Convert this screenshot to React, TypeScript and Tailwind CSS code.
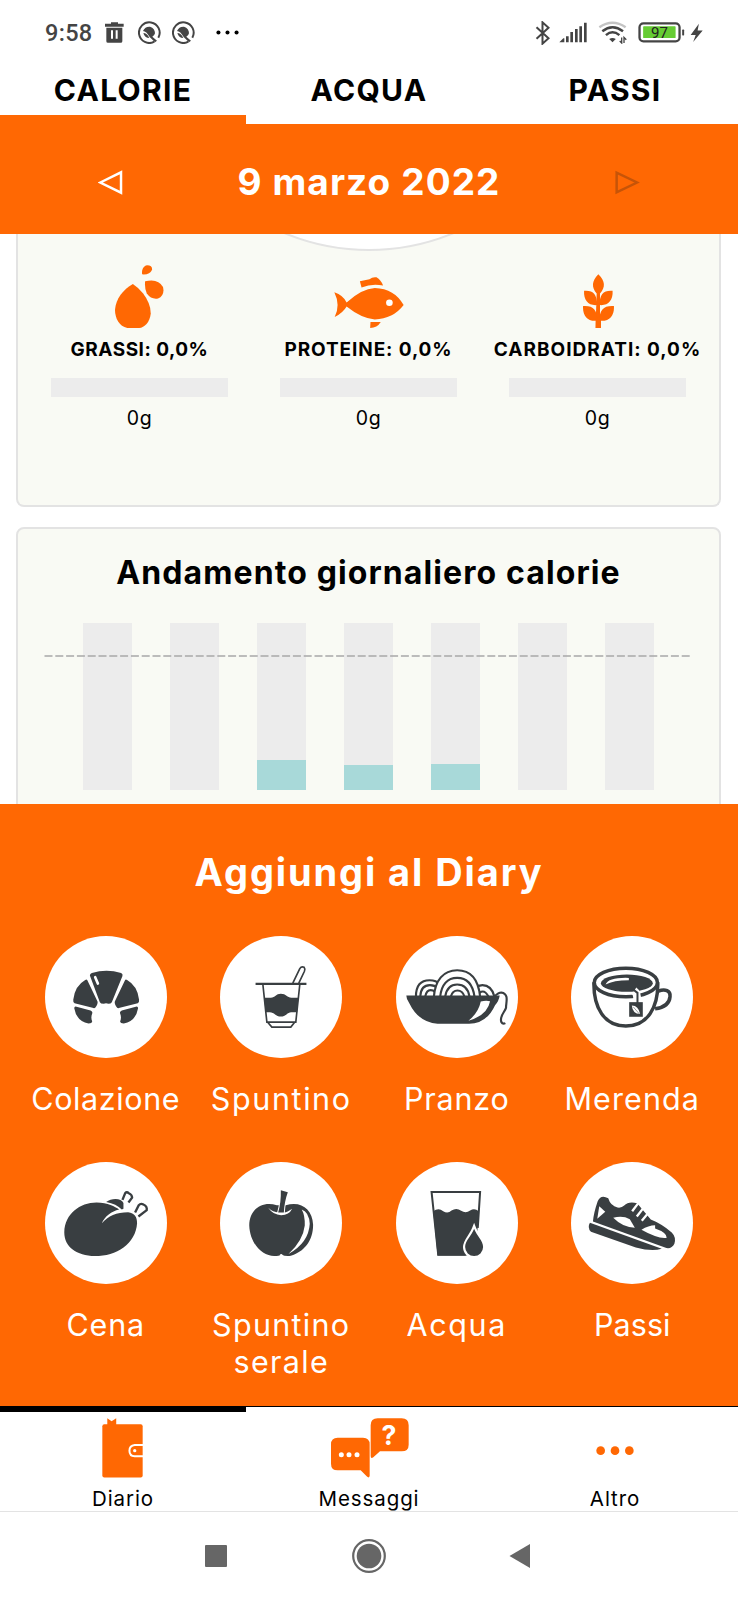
import React from 'react';

interface IconProps {
  box: string;
  className: string;
  children: React.ReactNode;
}

const Icon = ({ box, className, children }: IconProps) => (
  <svg viewBox={box} className={`block shrink-0 ${className}`} fill="currentColor" aria-hidden="true">
    {children}
  </svg>
);

const SpiralIcon = ({ className }: { className: string }) => (
  <Icon box="413 62 69 69" className={`h-[23px] w-[23px] ${className}`}>
    <path d="M462 124A31 31 0 1 1 474 112" fill="none" stroke="currentColor" strokeWidth="6" />
    <path d="M428 92Q434 78 449 79Q464 84 464 99Q462 107 456 109L470 121L464 126L448 110Q438 92 428 92Z" />
    <path d="M429 98Q440 98 447 113Q433 113 429 98Z" />
  </Icon>
);

const StatusBar = () => (
  <div className="flex h-16 shrink-0 items-center justify-between pl-[45px] pr-[35px] pt-px text-[#444444]">
    <div className="flex items-center">
      <span className="w-[47px] font-['Roboto',sans-serif] text-[23.5px] font-medium leading-8 tracking-[0.3px]">9:58</span>
      <Icon box="316 66 57 62" className="ml-[13px] h-[21px] w-[19px]">
        <path d="M334 66H355V71H372V80H316V71H334Z" />
        <path fillRule="evenodd" d="M320 83H368V123Q368 128 363 128H325Q320 128 320 123ZM334 90V116H340V90ZM348 90V116H354V90Z" />
      </Icon>
      <SpiralIcon className="ml-[14px]" />
      <SpiralIcon className="ml-[11px]" />
      <Icon box="644 88 74 16" className="ml-[20px] h-[5px] w-[25px] text-black">
        <circle cx="652" cy="96" r="6.5" />
        <circle cx="681" cy="96" r="6.5" />
        <circle cx="710" cy="96" r="6.5" />
      </Icon>
    </div>
    <div className="flex items-center">
      <Icon box="499 62 47 72" className="h-[24px] w-[16px]">
        <path d="M503 81L539 114L521 130V66L539 82L503 115" fill="none" stroke="currentColor" strokeWidth="6" />
      </Icon>
      <Icon box="571 67 84 63" className="ml-[8px] h-[21px] w-[28px]">
        <path d="M572 128L584 116H587V128ZM592 110H600V128H592ZM605 97H613V128H605ZM619 88H627V128H619ZM632 80H640V128H632ZM646 69H654V128H646Z" />
      </Icon>
      <Icon box="686 66 88 70" className="ml-[11px] h-[23px] w-[29px]">
        <g fill="none" stroke="currentColor" strokeWidth="7.5">
          <path d="M690 85Q730 58 770 85" stroke="#c4c4c4" />
          <path d="M699 97Q730 73 762 97" />
          <path d="M710 109Q730 92 751 109" />
        </g>
        <path d="M720 121Q730 115 740 121L730 131Z" />
        <path d="M758 116V133L752 127M765 133V116L772 123" fill="none" stroke="currentColor" strokeWidth="4" />
      </Icon>
      <Icon box="804 67 142 64" className="ml-[11px] h-[21px] w-[47px]">
        <rect x="808" y="71" width="122" height="55" rx="12" fill="white" stroke="currentColor" strokeWidth="7" />
        <rect x="819" y="80" width="99" height="36" rx="2" fill="#66cc33" />
        <rect x="938" y="90" width="6" height="18" rx="2" />
        <text x="869" y="115" textAnchor="middle" fontFamily="Roboto, sans-serif" fontSize="46" fill="#222222">97</text>
      </Icon>
      <Icon box="960 68 41 61" className="ml-[5px] h-[20px] w-[13px]">
        <path d="M988 69L962 105H978L970 127L1000 91H984Z" />
      </Icon>
    </div>
  </div>
);

const Tabs = () => (
  <div className="grid shrink-0 grid-cols-3 pt-px text-center text-[30px] font-bold leading-[50px] tracking-[1.3px] text-black">
    <div className="border-b-[9px] border-[#ff6803]">CALORIE</div>
    <div>ACQUA</div>
    <div>PASSI</div>
  </div>
);

const DateBar = () => (
  <div className="flex h-[110px] shrink-0 items-center justify-between bg-[#ff6803] px-[98px] pt-[5px] text-white">
    <Icon box="294 510 74 76" className="mt-[2px] h-[25px] w-[25px]">
      <path d="M300 548L363 517V579Z" fill="none" stroke="currentColor" strokeWidth="7.5" />
    </Icon>
    <h1 className="text-[37px] font-bold leading-[48px] tracking-[1.1px]">9 marzo 2022</h1>
    <Icon box="740 510 74 76" className="mt-[2px] h-[25px] w-[25px] text-[#c65408]">
      <path d="M744 518V578L806 548Z" fill="none" stroke="currentColor" strokeWidth="7.5" />
    </Icon>
  </div>
);

const FatIcon = () => (
  <Icon box="345 119 148 190" className="h-[63px] w-[49px]">
    <path d="M399 176Q416 187 430 205Q453 235 453 265C450 293 434 307 418 309H382C358 305 345 280 345 255C347 220 370 193 399 176Z" />
    <path d="M436 168Q475 158 490 185Q496 212 475 220Q455 224 441 205Q434 190 436 168Z" />
    <path d="M427 147Q424 128 438 120Q458 118 457 133Q450 149 427 147Z" />
  </Icon>
);

const FishIcon = () => (
  <Icon box="1002 119 211 190" className="ml-[1px] h-[63px] w-[70px]">
    <path d="M1040 232Q1085 190 1125 188Q1185 190 1212 240Q1180 282 1125 283Q1085 280 1040 244Q1030 262 1004 276Q1022 240 1003 201Q1030 210 1040 232Z" />
    <path d="M1080 168L1109 162Q1118 154 1130 156Q1144 164 1150 181Q1116 174 1085 187Z" />
    <path d="M1112 291H1143Q1132 309 1111 309Z" />
    <circle cx="1169" cy="233" r="10" fill="white" />
  </Icon>
);

const WheatIcon = () => (
  <Icon box="641 119 93 190" className="ml-[2px] h-[63px] w-[31px]">
    <path d="M687 147C708 168 709 186 692 205V309H679V290L682 205C666 186 667 168 687 147Z" />
    <path d="M644 197C672 195 682 207 684 240C658 243 642 226 644 197ZM730 197C702 195 692 207 690 240C716 243 732 226 730 197Z" />
    <path d="M641 243C672 241 683 254 684 287C654 291 639 270 641 243ZM734 243C703 241 691 254 690 287C721 291 736 270 734 243Z" />
    <path d="M680 278H695V309H679Z" />
  </Icon>
);

const nutrients = [
  { label: 'GRASSI: 0,0%', amount: '0g', icon: <FatIcon />, tracking: 'tracking-[0.5px]' },
  { label: 'PROTEINE: 0,0%', amount: '0g', icon: <FishIcon />, tracking: 'tracking-[0.9px]' },
  { label: 'CARBOIDRATI: 0,0%', amount: '0g', icon: <WheatIcon />, tracking: 'tracking-[1px]' },
];

const NutrientsCard = () => (
  <div className="relative ml-4 mr-[17px] h-[273px] shrink-0 overflow-hidden rounded-b-lg border-2 border-t-0 border-[#e3e3e3] bg-[#f9faf4]">
    {/* lower edge of the daily calories gauge */}
    <div className="absolute left-1/2 bottom-[254px] h-[442px] w-[442px] -translate-x-1/2 rounded-full border-2 border-[#e3e3e3] bg-white" />
    <div className="relative grid grid-cols-3 px-[7px] pt-[31px]">
      {nutrients.map((item) => (
        <div key={item.label} className="flex flex-col items-center">
          <div className="text-[#ff6803]">{item.icon}</div>
          <p className={`mt-2 whitespace-nowrap text-[19px] font-bold leading-[27px] text-black ${item.tracking}`}>{item.label}</p>
          <div className="mt-[15px] h-[19px] w-[177px] bg-[#ececec]" />
          <p className="mt-2 text-[19.5px] leading-[27px] tracking-[0.6px] text-black">{item.amount}</p>
        </div>
      ))}
    </div>
  </div>
);

const dailyCalories = [0, 0, 30, 25, 26, 0, 0];

const TrendCard = () => (
  <div className="ml-4 mr-[17px] mt-5 h-[300px] shrink-0 rounded-lg border-2 border-[#e3e3e3] bg-[#f9faf4] pt-6">
    <h2 className="text-center text-[32px] font-bold leading-10 tracking-[1.1px] text-black">Andamento giornaliero calorie</h2>
    <div className="relative mt-[30px] flex h-[167px] gap-[38px] pl-[65px]">
      {dailyCalories.map((value, index) => (
        <div key={index} className="flex w-[49px] flex-col justify-end bg-[#ececec]">
          <div className="bg-[#a8d9d9]" style={{ height: value }} />
        </div>
      ))}
      <svg className="absolute left-[26px] top-8 h-[2px] w-[648px]" aria-hidden="true">
        <path d="M0.5 1H648" stroke="#a8a8a8" strokeWidth="1.6" strokeDasharray="8 2.8" />
      </svg>
    </div>
  </div>
);

const mealIcon = 'h-full w-full';

const CroissantIcon = () => {
  const half = (
    <>
      <path d="M262 390L293 455Q295 462 286 474Q283 476 278 474L224 460Q219 459 220 450Q224 408 256 390Q260 387 262 390Z" />
      <path d="M227 470L272 482Q279 485 277 491Q272 503 277 515Q276 521 266 521Q230 515 223 475Q223 470 227 470Z" />
    </>
  );
  return (
    <Icon box="135 258 367 367" className={mealIcon}>
      <path d="M270 377Q270 371 276 369Q320 356 364 369Q370 372 368 378L336 457Q333 462 326 462Q318 459 312 462Q302 462 300 457Z" />
      <path d="M286 382L294 401" stroke="white" strokeWidth="8" strokeLinecap="round" />
      {half}
      <g transform="translate(638 0) scale(-1 1)">{half}</g>
    </Icon>
  );
};

const YogurtIcon = () => (
  <Icon box="662 258 367 367" className={mealIcon}>
    <g fill="none" stroke="currentColor" strokeWidth="5">
      <path d="M769 402H922" strokeWidth="6.5" />
      <path d="M791 404L803 517H890L902 404" />
      <path d="M806 518L818 532H875L886 518" />
      <path d="M881 400L902 356Q907 348 915 352Q919 357 916 364L899 400" />
    </g>
    <path d="M795 444H815C828 444 830 432 845 432C861 432 864 444 877 444H898L894 487H876C865 487 860 500 845 500C830 500 825 487 812 487H799Z" />
  </Icon>
);

const PastaIcon = () => (
  <Icon box="80 258 367 367" className={mealIcon}>
    <g fill="white" stroke="currentColor" strokeWidth="6.5">
      <path d="M307 440Q315 406 340 406Q367 406 376 440" />
      <path d="M322 440Q342 410 358 440" />
      <path d="M140 440Q140 391 181 391Q222 391 222 440" />
      <path d="M153 440Q155 406 182 406Q212 406 212 440" />
      <path d="M168 440Q172 421 184 421Q200 421 202 440" />
      <path d="M194 440C198 392 222 361 264 361C306 361 328 392 333 440" />
      <path d="M213 440C217 405 235 384 264 384C293 384 311 405 316 440" />
      <path d="M228 440C232 417 243 404 264 404C285 404 297 417 301 440" />
      <path d="M245 440Q250 422 265 422Q280 422 286 440" />
      <path d="M376 440Q388 428 397 428C422 432 410 461 411 474C408 486 390 499 397 517Q401 524 409 520" fill="none" />
    </g>
    <path d="M111 437H392Q389 455 378 466Q352 522 300 522H205Q148 518 120 460Q111 448 111 437Z" />
    <path d="M335 455Q350 451 363 454Q355 496 298 513Q328 489 335 455Z" fill="white" />
  </Icon>
);

const TeaIcon = () => (
  <Icon box="605 258 367 367" className={mealIcon}>
    <g fill="none" stroke="currentColor" strokeWidth="10.5">
      <path d="M868 424C888 415 905 423 903 440C901 465 881 474 858 477" />
      <path d="M674 397C672 473 705 529 770 529C835 529 868 473 866 397" fill="white" />
      <ellipse cx="770" cy="398" rx="95" ry="43" />
    </g>
    <ellipse cx="773" cy="400" rx="78" ry="26" />
    <path d="M709 404Q718 382 779 384V391Q733 391 709 404Z" fill="white" />
    <path d="M795 423Q806 430 804 460" fill="none" stroke="white" strokeWidth="24" />
    <path d="M791 418L805 429V460" fill="none" stroke="currentColor" strokeWidth="6" />
    <path d="M780 457H821V501H780Z" />
    <path d="M788 467Q808 467 813 493Q790 492 788 467Z" fill="white" />
    <path d="M792 471L812 494" stroke="currentColor" strokeWidth="1.5" />
  </Icon>
);

const RoastIcon = () => (
  <Icon box="135 64 367 367" className={mealIcon}>
    <path d="M193 275C195 220 240 186 290 186C325 187 345 198 358 207C335 212 315 228 306 248C325 226 350 215 385 215C405 217 412 230 412 248C408 310 350 347 285 347C230 345 193 320 193 275Z" />
    <path d="M319 184C335 172 365 172 371 187V205L366 207C355 195 340 188 319 184Z" />
    <g fill="none" stroke="currentColor" strokeWidth="7">
      <path d="M368 178L376 158Q381 152 387 158Q397 162 397 171L386 186" />
      <path d="M406 216L417 194Q423 187 431 192Q443 197 441 209L416 228" />
    </g>
  </Icon>
);

const AppleIcon = () => (
  <Icon box="662 64 367 367" className={mealIcon}>
    <path d="M833 194C790 180 750 205 750 255C752 310 790 347 825 347Q840 347 846 342Q860 349 875 346C915 335 943 300 942 252C940 205 905 180 860 194Z" />
    <path d="M908 207Q930 215 932 250Q929 307 868 341Q912 300 917 255Q918 225 908 207Z" fill="white" />
    <path d="M807 202Q822 224 846 224Q870 224 879 205Q864 216 855 216H838Q822 216 807 202Z" fill="white" />
    <path d="M845 149L866 155Q856 182 854 216H837Q846 185 845 149Z" stroke="white" strokeWidth="6" paintOrder="stroke" />
    <path d="M842 343Q847 337 852 345L847 349Z" fill="white" />
  </Icon>
);

const WaterIcon = () => (
  <Icon box="80 64 367 367" className={mealIcon}>
    <path d="M326 262L333 154H187L207 343H290" fill="none" stroke="currentColor" strokeWidth="6" />
    <path d="M192 212Q208 201 222 212Q236 220 247 210Q262 200 276 211Q290 220 303 210Q316 202 329 212L325 270L302 345H205Z" />
    <path d="M315 265C323 286 342 301 342 320A27 27 0 1 1 288 320C288 301 307 286 315 265Z" stroke="white" strokeWidth="13" paintOrder="stroke" />
  </Icon>
);

const ShoeIcon = () => (
  <Icon box="605 64 367 367" className={mealIcon}>
    <path d="M662 247L878 325Q848 334 800 321L665 274Q653 262 662 247Z" />
    <path d="M671 243Q673 218 685 183Q694 160 717 173Q724 196 745 201Q757 203 765 195Q778 181 804 188L845 237Q878 250 908 276Q922 290 916 310Q908 326 892 323Z" />
    <g fill="white">
      <path d="M690 197L708 214L684 235Z" />
      <path d="M732 232Q760 224 782 236L797 262Q762 262 732 232Z" />
      <path d="M817 268Q838 254 858 254L858 264Q893 276 893 292Q867 296 817 268Z" />
    </g>
    <path d="M808 187L789 212M823 202L803 228M838 217L818 241" stroke="white" strokeWidth="7" />
  </Icon>
);

const meals = [
  { label: 'Colazione', icon: <CroissantIcon />, tracking: 'tracking-[0.6px]' },
  { label: 'Spuntino', icon: <YogurtIcon />, tracking: 'tracking-[1.6px]' },
  { label: 'Pranzo', icon: <PastaIcon />, tracking: 'tracking-[0.8px]' },
  { label: 'Merenda', icon: <TeaIcon />, tracking: 'tracking-[1.1px]' },
  { label: 'Cena', icon: <RoastIcon />, tracking: 'tracking-[0.8px]' },
  { label: 'Spuntino serale', icon: <AppleIcon />, tracking: 'tracking-[1.3px]' },
  { label: 'Acqua', icon: <WaterIcon />, tracking: 'tracking-[1.6px]' },
  { label: 'Passi', icon: <ShoeIcon />, tracking: 'tracking-[0.1px]' },
];

const AddToDiary = () => (
  <section className="h-[602px] shrink-0 bg-[#ff6803] px-[18px] pt-11 text-white">
    <h2 className="text-center text-[38px] font-bold leading-[48px] tracking-[1.9px]">Aggiungi al Diary</h2>
    <div className="mt-10 grid grid-cols-4 gap-y-[45px]">
      {meals.map((meal) => (
        <button key={meal.label} type="button" className="flex flex-col items-center">
          <span className="h-[122px] w-[122px] rounded-full bg-white text-[#393e41]">{meal.icon}</span>
          <span className={`mt-[22px] w-[150px] text-[30.5px] leading-[37px] ${meal.tracking}`}>{meal.label}</span>
        </button>
      ))}
    </div>
  </section>
);

const BottomNav = () => (
  <nav className="grid h-[106px] shrink-0 grid-cols-3 border-b border-t border-b-[#e3e3e3] border-t-black text-[20.5px] leading-6 tracking-[0.9px] text-black">
    <div className="flex flex-col items-center border-t-[5px] border-black">
      <Icon box="308 70 124 180" className="mr-[1px] mt-[6px] h-[60px] w-[41px] text-[#ff6803]">
        <rect x="309" y="88" width="122" height="161" rx="6" />
        <path d="M324 92V70L337 79L351 70V92Z" />
        <path d="M432 151H407Q391 153 391 168Q391 184 407 185H432" fill="none" stroke="white" strokeWidth="6" />
        <circle cx="407" cy="168" r="5" fill="white" />
      </Icon>
      <span className="mt-[9px]">Diario</span>
    </div>
    <div className="flex flex-col items-center">
      <Icon box="991 70 234 180" className="ml-[1px] mt-[11px] h-[60px] w-[78px] text-[#ff6803]">
        <path d="M1011 129H1087Q1107 129 1107 149V244Q1105 252 1098 245L1080 227H1011Q991 227 991 207V149Q991 129 1011 129Z" />
        <path d="M1131 71H1203Q1224 71 1224 92V150Q1224 170 1203 170H1138L1118 188Q1110 193 1110 184V92Q1110 71 1131 71Z" />
        <g fill="white">
          <circle cx="1022" cy="180" r="7.5" />
          <circle cx="1045" cy="180" r="7.5" />
          <circle cx="1069" cy="180" r="7.5" />
          <text x="1165" y="150" textAnchor="middle" fontFamily="Inter, sans-serif" fontWeight="700" fontSize="80" letterSpacing="0">?</text>
        </g>
      </Icon>
      <span className="mt-[9px]">Messaggi</span>
    </div>
    <div className="flex flex-col items-center">
      <Icon box="683 79 114 180" className="mt-[11px] h-[60px] w-[38px] text-[#ff6803]">
        <circle cx="697" cy="177" r="13" />
        <circle cx="740" cy="177" r="13" />
        <circle cx="783" cy="177" r="13" />
      </Icon>
      <span className="mt-[9px]">Altro</span>
    </div>
  </nav>
);

const SystemNav = () => (
  <div className="flex flex-1 items-center bg-white pl-[205px] text-[#666666]">
    <div className="h-[22px] w-[22px] rounded-[1px] bg-[#666666]" />
    <Icon box="0 0 34 34" className="ml-[125px] h-[34px] w-[34px]">
      <circle cx="17" cy="17" r="15.8" fill="none" stroke="currentColor" strokeWidth="2.2" />
      <circle cx="17" cy="17" r="12.3" />
    </Icon>
    <Icon box="0 0 21 24" className="ml-[123px] h-[24px] w-[21px]">
      <path d="M0.5 12L21 0V24Z" />
    </Icon>
  </div>
);

const App = () => {
  return (
    <div className="flex h-[1600px] w-[738px] flex-col overflow-hidden bg-white font-['Inter',sans-serif]">
      <StatusBar />
      <Tabs />
      <DateBar />
      <main className="flex h-[570px] shrink-0 flex-col overflow-hidden">
        <NutrientsCard />
        <TrendCard />
      </main>
      <AddToDiary />
      <BottomNav />
      <SystemNav />
    </div>
  );
};

export default App;
